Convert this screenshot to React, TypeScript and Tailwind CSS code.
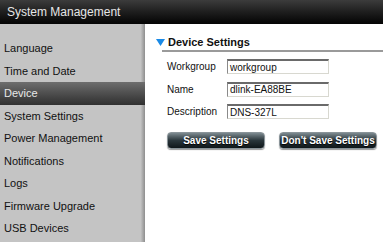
import React from "react";

const menu = [
  "Language",
  "Time and Date",
  "Device",
  "System Settings",
  "Power Management",
  "Notifications",
  "Logs",
  "Firmware Upgrade",
  "USB Devices",
];

const fields = [
  { label: "Workgroup", value: "workgroup" },
  { label: "Name", value: "dlink-EA88BE" },
  { label: "Description", value: "DNS-327L" },
];

function DarkButton({ children, w }: { children: React.ReactNode; w: string }) {
  return (
    <button
      className={`${w} h-[17px] rounded-[4px] border border-[#8a9499] bg-gradient-to-b from-[#7d8a90] via-[#2a363b] to-[#0f171a] text-[10px] font-bold text-white [text-shadow:0_1px_1px_#000] shadow-[0_1px_1px_rgba(0,0,0,0.4)]`}
    >
      {children}
    </button>
  );
}

export default function App() {
  return (
    <div className="w-[383px] h-[242px] overflow-hidden bg-white font-['Liberation_Sans',Arial,sans-serif] flex flex-col">
      {/* header */}
      <div className="h-[24px] shrink-0 bg-gradient-to-b from-[#3c3c3c] to-[#050505] flex items-center pl-[7px] text-[12px] text-[#e6e6e6]">
        System Management
      </div>

      <div className="flex flex-1">
        {/* sidebar */}
        <div className="w-[145px] shrink-0 bg-gradient-to-r from-[#c4c4c4] from-[97%] to-[#8e8e8e] pt-[13px]">
          {menu.map((m) =>
            m === "Device" ? (
              <div
                key={m}
                className="h-[22.5px] flex items-center pl-[4px] pr-[3px] text-[11px] text-[#e8e8e8] bg-gradient-to-b from-[#6e6e6e] to-[#303030]"
              >
                {m}
              </div>
            ) : (
              <div key={m} className="h-[22.5px] flex items-center pl-[4px] text-[11px] text-[#111]">
                {m}
              </div>
            )
          )}
        </div>

        {/* content */}
        <div className="flex-1 pt-[12px] pl-[11px]">
          <div className="flex items-center gap-[3px] h-[12px]">
            <svg width="9" height="7" viewBox="0 0 9 7">
              <polygon points="0,0 9,0 4.5,7" fill="#1a8ae6" />
            </svg>
            <span className="text-[11px] font-bold text-[#111]">Device Settings</span>
          </div>
          <div className="mt-[2px] ml-[6px] h-[2px] bg-[#9a9a9a]" />

          <div className="mt-[7px] ml-[11px] flex flex-col gap-[7.5px]">
            {fields.map((f) => (
              <div key={f.label} className="flex items-center">
                <span className="w-[60px] text-[10px] text-[#111]">{f.label}</span>
                <div className="w-[102px] h-[15px] border-t-2 border-l border-t-[#6a6a6a] border-l-[#8a8a8a] border-r border-b border-r-[#d8d8d0] border-b-[#d8d8d0] flex items-center pl-[2px] text-[10px] text-[#111]">
                  {f.value}
                </div>
              </div>
            ))}
          </div>

          <div className="mt-[13px] ml-[11px] flex gap-[14px]">
            <DarkButton w="w-[98px]">Save Settings</DarkButton>
            <DarkButton w="w-[98px]">Don't Save Settings</DarkButton>
          </div>
        </div>
      </div>
    </div>
  );
}
